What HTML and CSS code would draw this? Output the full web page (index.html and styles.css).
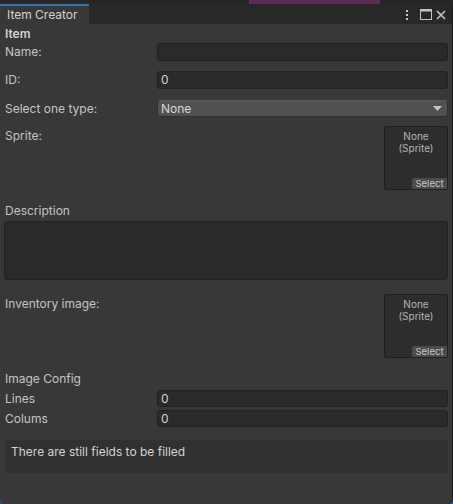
FILE: index.html
```html
<!DOCTYPE html>
<html>
<head>
<meta charset="utf-8">
<link rel="stylesheet" href="styles.css">
</head>
<body>
<div class="backdrop">
  <div class="bg-gap"></div>
  <div class="bg-pink"></div>
</div>
<div class="window">
  <div class="tabbar">
    <div class="tab">Item Creator</div>
    <div class="tab-icons">
      <svg width="4" height="12" viewBox="0 0 4 12" class="ico kebab"><rect x="1" y="1" width="2" height="2" fill="#c4c4c4"/><rect x="1" y="5" width="2" height="2" fill="#c4c4c4"/><rect x="1" y="9" width="2" height="2" fill="#c4c4c4"/></svg>
      <svg width="12" height="11" viewBox="0 0 12 11" class="ico maxi"><rect x="0.5" y="0.5" width="11" height="10" fill="none" stroke="#c4c4c4"/><rect x="0.5" y="0.5" width="11" height="2" fill="#c4c4c4"/></svg>
      <svg width="10" height="10" viewBox="0 0 10 10" class="ico"><path d="M1 1 L9 9 M9 1 L1 9" stroke="#c4c4c4" stroke-width="1.6"/></svg>
    </div>
  </div>
  <div class="content">
    <div class="header">Item</div>
    <div class="row r-name"><div class="label">Name:</div><div class="field"></div></div>
    <div class="row r-id"><div class="label">ID:</div><div class="field">0</div></div>
    <div class="row r-select"><div class="label">Select one type:</div><div class="dropdown"><span>None</span><svg width="9" height="6" viewBox="0 0 9 6"><path d="M0 0 L9 0 L4.5 5 Z" fill="#c4c4c4"/></svg></div></div>
    <div class="obj-row r-sprite"><div class="label top">Sprite:</div><div class="objbox"><div class="objtext">None<br>(Sprite)</div><div class="selbtn">Select</div></div></div>
    <div class="plain r-desc">Description</div>
    <div class="textarea"></div>
    <div class="obj-row r-inv"><div class="label top">Inventory image:</div><div class="objbox"><div class="objtext">None<br>(Sprite)</div><div class="selbtn">Select</div></div></div>
    <div class="plain r-cfg">Image Config</div>
    <div class="row r-lines"><div class="label">Lines</div><div class="field">0</div></div>
    <div class="row r-cols"><div class="label">Colums</div><div class="field">0</div></div>
    <div class="help">There are still fields to be filled</div>
  </div>
</div>
</body>
</html>
```

FILE: styles.css
```css
html, body {
  margin: 0;
  padding: 0;
}
body {
  width: 453px;
  height: 504px;
  overflow: hidden;
  background: linear-gradient(to bottom, #232323 0, #232323 430px, #2b4a78 460px);
  font-family: Inter, "Noto Sans", sans-serif;
  font-size: 12px;
  color: #c4c4c4;
}
.backdrop {
  height: 4px;
  display: flex;
  background: #262626;
}
.bg-gap { width: 249px; }
.bg-pink { width: 131px; background: #5b2c55; }
.window {
  height: 500px;
  margin-right: 1px;
  background: #383838;
  border-radius: 0 6px 6px 6px;
  overflow: hidden;
  display: flex;
  flex-direction: column;
  box-shadow: 1px 0 0 #1a1a1a;
}
.tabbar {
  height: 20px;
  background: #282828;
  display: flex;
  align-items: stretch;
  flex-shrink: 0;
}
.tab {
  width: 82px;
  padding-left: 7px;
  background: #383838;
  border-top: 2px solid #3a72b0;
  line-height: 18px;
  color: #d2d2d2;
  font-size: 12px;
}
.tab-icons {
  margin-left: auto;
  display: flex;
  align-items: center;
  padding-right: 6px;
  padding-top: 1px;
}
.kebab { margin-right: 11px; }
.maxi { margin-right: 4px; }
.ico { display: block; }
.content {
  display: flex;
  flex-direction: column;
  padding-left: 5px;
  padding-right: 4px;
}
.header {
  font-weight: 600;
  height: 18px;
  line-height: 18px;
  margin-top: 1px;
  color: #d2d2d2;
}
.row {
  display: flex;
  height: 18px;
  align-items: stretch;
}
.label {
  width: 152px;
  flex-shrink: 0;
  line-height: 18px;
  white-space: nowrap;
}
.label.top { padding-top: 1px; }
.field {
  flex: 1;
  background: #2a2a2a;
  border: 1px solid #212121;
  border-radius: 3px;
  line-height: 16px;
  padding-left: 3px;
  color: #d2d2d2;
}
.dropdown {
  flex: 1;
  background: #515151;
  border: 1px solid #303030;
  border-top-color: #5a5a5a;
  border-radius: 3px;
  display: flex;
  align-items: center;
  justify-content: space-between;
  padding: 0 5px 0 3px;
  color: #d8d8d8;
}
.dropdown svg { display: block; margin-top: 1px; }
.r-id { margin-top: 10px; }
.r-select { margin-top: 11px; height: 17px; }
.obj-row {
  display: flex;
  justify-content: space-between;
  align-items: flex-start;
}
.objbox {
  width: 62px;
  height: 62px;
  border: 1px solid #1f1f1f;
  background: #2d2d2d;
  border-radius: 2px;
  display: flex;
  flex-direction: column;
  justify-content: space-between;
  align-items: flex-end;
}
.objtext {
  align-self: stretch;
  text-align: center;
  font-size: 10px;
  line-height: 12px;
  color: #b4b4b4;
  padding-top: 3px;
}
.selbtn {
  width: 35px;
  height: 11px;
  background: #4a4a4a;
  color: #c8c8c8;
  font-size: 9.5px;
  line-height: 11px;
  text-align: center;
  border-top-left-radius: 2px;
}
.r-sprite { margin-top: 9px; }
.plain {
  line-height: 18px;
  height: 18px;
}
.r-desc { margin-top: 12px; }
.textarea {
  margin-top: 1px;
  margin-left: -1px;
  height: 57px;
  background: #2a2a2a;
  border: 1px solid #212121;
  border-radius: 3px;
}
.r-inv { margin-top: 14px; }
.r-cfg { margin-top: 12px; }
.r-lines { margin-top: 2px; height: 17px; }
.r-cols { margin-top: 3px; height: 17px; }
.help {
  margin-top: 13px;
  height: 33px;
  background: #313131;
  padding-left: 6px;
  line-height: 24px;
  color: #d2d2d2;
  box-sizing: border-box;
}
```
